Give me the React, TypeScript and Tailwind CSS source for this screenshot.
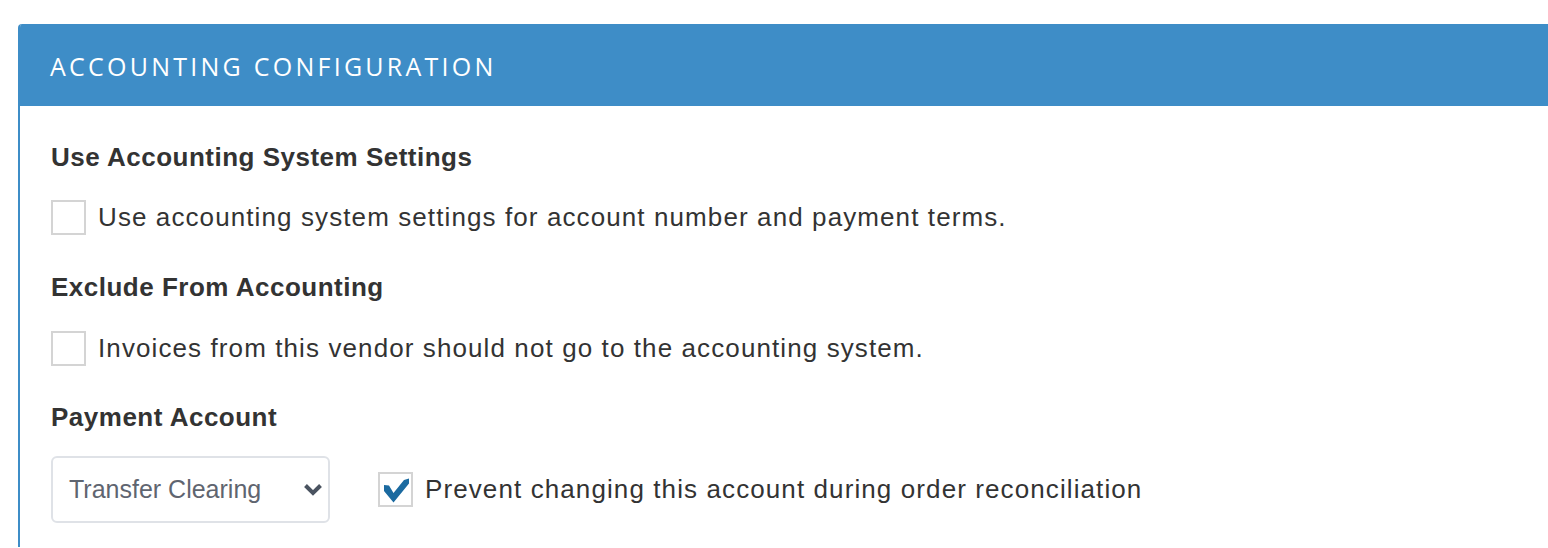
function CheckRow({ checked, label }: { checked?: boolean; label: string }) {
  return (
    <div className="flex h-[35px] items-center gap-[12px]">
      <span className="relative size-[35px] shrink-0 border-2 border-[#d4d4d4] bg-white">
        {checked && (
          <svg viewBox="0 0 35 35" className="absolute -inset-[2px] size-[35px]">
            <polygon points="6,13 11,13.5 15.5,21 26,8 31,6.5 31,11.5 15.5,30.5 6,19" fill="#1b6aa0" />
          </svg>
        )}
      </span>
      <span className="text-[26px] leading-[35px] tracking-[1.1px] whitespace-nowrap text-[#333]">{label}</span>
    </div>
  );
}

function Heading({ children, className }: { children: string; className?: string }) {
  return (
    <h3 className={`text-[26px] leading-[30px] font-bold tracking-[0.5px] text-[#333] ${className ?? ""}`}>
      {children}
    </h3>
  );
}

function SelectBox({ value }: { value: string }) {
  return (
    <div className="flex h-[67px] w-[279px] items-center justify-between rounded-[6px] border-2 border-[#dfe2e7] pl-[16px] pr-[5px]">
      <span className="text-[25px] text-[#5f6570]">{value}</span>
      <svg viewBox="0 0 20 13" className="h-[13px] w-[20px]">
        <polyline points="2.5,2.5 10,10 17.5,2.5" fill="none" stroke="#4a5360" strokeWidth={4} />
      </svg>
    </div>
  );
}

export default function App() {
  return (
    <div className="min-h-[548px] bg-white pt-6 pl-[18px] font-['Liberation_Sans',Arial,sans-serif]">
      <section className="overflow-hidden rounded-tl-[4px] border-l-2 border-[#3e8dc7]">
        <div className="flex h-[82px] items-center bg-[#3e8dc7] pt-[3px] pl-[30px]">
          <h2 className="font-['Open_Sans',sans-serif] text-[25px] font-normal tracking-[0.13em] text-white">
            ACCOUNTING CONFIGURATION
          </h2>
        </div>
        <div className="flex flex-col pl-[31px] pt-[36px] pb-6">
          <Heading>Use Accounting System Settings</Heading>
          <div className="mt-[28px]">
            <CheckRow label="Use accounting system settings for account number and payment terms." />
          </div>
          <Heading className="mt-[37px]">Exclude From Accounting</Heading>
          <div className="mt-[29px]">
            <CheckRow label="Invoices from this vendor should not go to the accounting system." />
          </div>
          <Heading className="mt-[36px]">Payment Account</Heading>
          <div className="mt-[24px] flex items-center gap-[48px]">
            <SelectBox value="Transfer Clearing" />
            <CheckRow checked label="Prevent changing this account during order reconciliation" />
          </div>
        </div>
      </section>
    </div>
  );
}
